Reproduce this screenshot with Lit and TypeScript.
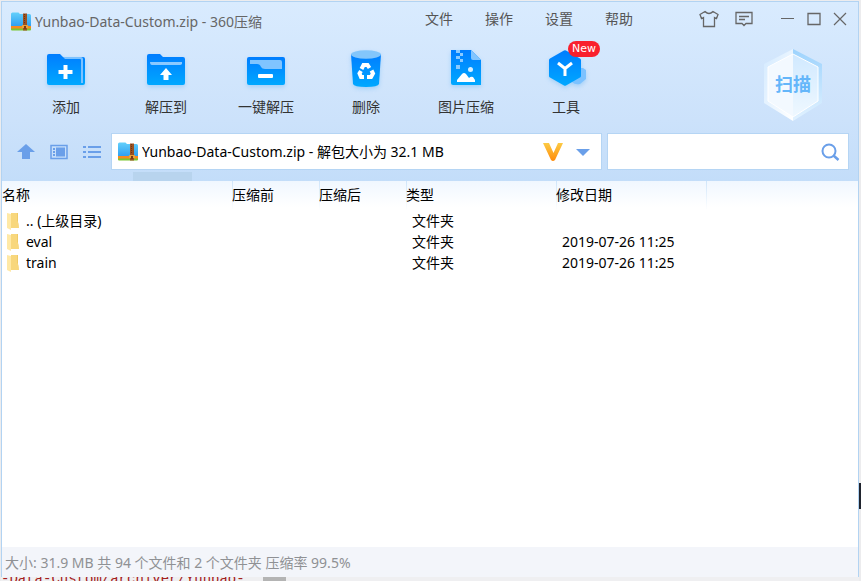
import { LitElement, html, css, svg } from "lit";
import { customElement } from "lit/decorators.js";

interface Entry {
  name: string;
  type: string;
  date: string;
}

const entries: Entry[] = [
  { name: ".. (上级目录)", type: "文件夹", date: "" },
  { name: "eval", type: "文件夹", date: "2019-07-26 11:25" },
  { name: "train", type: "文件夹", date: "2019-07-26 11:25" },
];

const blue = (id: string) => svg`
  <defs><linearGradient id=${id} x1="0" y1="0" x2="0" y2="1">
    <stop offset="0" stop-color="#007dff"/><stop offset="1" stop-color="#00a8ff"/>
  </linearGradient></defs>`;

const archiveIcon = html`<svg class="archive" viewBox="0 0 20 19" width="20" height="19" aria-hidden="true">
  <defs><linearGradient id="ar" x1="0" y1="0" x2="0" y2="1">
    <stop offset="0" stop-color="#63d0fb"/><stop offset="1" stop-color="#2c9cf0"/>
  </linearGradient></defs>
  <path d="M0 2q0-1.500 1.500-1.500h6L9 2h9.500Q20 2 20 3.500V15H0z" fill="url(#ar)"/>
  <path d="M0 14h20v3H0z" fill="#f58b1e"/>
  <path d="M0 16.500h20v1q0 1-1 1H1q-1 0-1-1z" fill="#7cc630"/>
  <path d="M12 1.500h4v17h-4z" fill="#9a5122"/>
  <path d="M13.500 2v10" stroke="#6b3413" stroke-dasharray="1 1"/>
  <path d="M11 13h6v3h-6z" fill="#e9a23b"/>
  <path d="M13 14h2v3h-2z" fill="#7a3c14"/>
</svg>`;

const icons = {
  add: html`<svg viewBox="0 0 40 40" width="40" height="40" aria-hidden="true">${blue("g1")}
    <path d="M1 7q0-2 2-2h11l3 3h20q2 0 2 2v24q0 2-2 2H3q-2 0-2-2z" fill="url(#g1)"/>
    <path d="M17 8h18q2 0 2 2v24h-2V11q0-1-1-1H19z" fill="#7cc2ff"/>
    <path d="M17.500 16h4v5h5v4h-5v5h-4v-5h-5v-4h5z" fill="#fff"/></svg>`,
  extractTo: html`<svg viewBox="0 0 40 40" width="40" height="40" aria-hidden="true">${blue("g2")}
    <path d="M1 7q0-2 2-2h11l3 3h20q2 0 2 2v24q0 2-2 2H3q-2 0-2-2z" fill="url(#g2)"/>
    <path d="M4 13h32v2q-1 1-2 1H6q-2 0-2-3z" fill="#8bc9ff"/>
    <path d="M20 19l6 7h-3.500v5h-5v-5H14z" fill="#fff"/></svg>`,
  quick: html`<svg viewBox="0 0 40 40" width="40" height="40" aria-hidden="true">${blue("g3")}
    <path d="M1 10q0-2 2-2h34q2 0 2 2v24q0 2-2 2H3q-2 0-2-2z" fill="url(#g3)"/>
    <path d="M4 11h30q2 0 2 2v7H19q-3 0-4-2-1-3-4-3H4z" fill="#80c4ff"/>
    <rect x="12" y="25" width="15" height="4" rx="1" fill="#fff"/></svg>`,
  remove: html`<svg viewBox="0 0 40 40" width="40" height="40" aria-hidden="true">${blue("g4")}
    <path d="M5 5h30l-2 30q-1 3-13 3T7 35z" fill="url(#g4)"/>
    <ellipse cx="20" cy="5.500" rx="15" ry="4.200" fill="#83c6fb"/>
    <g fill="none" stroke="#fff" stroke-width="4">
      <path d="M15.500 20l2-4h4l2 3"/><path d="M25.500 21.500l1.500 3-2 3.500h-4"/><path d="M18 28h-3l-1.500-3.500 1.500-2.500"/>
    </g></svg>`,
  image: html`<svg viewBox="0 0 40 40" width="40" height="40" aria-hidden="true">${blue("g5")}
    <path d="M5 1h20l10 10v25H7q-2 0-2-2z" fill="url(#g5)"/>
    <path d="M25 1l10 10H27q-2 0-2-2z" fill="#82c5ff"/>
    <path d="M10 1h4v3h-4zM14 4h3v3h-3zM10 7h4v3h-4zM14 10h3v3h-3zM10 16h4v4h-4z" fill="#8bcaff"/>
    <circle cx="24.500" cy="20.500" r="2.500" fill="#d5efff"/>
    <path d="M11 33v-2l5-6q2-2 4 0l3 4q2-2 4-1l2 3v2z" fill="#fff"/></svg>`,
  tools: html`<svg viewBox="0 0 40 40" width="40" height="40" aria-hidden="true">${blue("g6")}
    <path d="M32 19h5l3 2v9l-6 5q-5 1-8-2z" fill="#7cc2ff"/>
    <path d="M18 1.500q1-.5 2 0l14 8q1 .5 1 1.500v16q0 1-1 1.500l-14 8q-1 .5-2 0l-14-8q-1-.5-1-1.500V11q0-1 1-1.500z" fill="url(#g6)"/>
    <path d="M12 14l7 5.500 7-5.500M19 19v8" fill="none" stroke="#fff" stroke-width="3"/></svg>`,
};

const tools = [
  { label: "添加", icon: icons.add },
  { label: "解压到", icon: icons.extractTo },
  { label: "一键解压", icon: icons.quick },
  { label: "删除", icon: icons.remove },
  { label: "图片压缩", icon: icons.image },
  { label: "工具", icon: icons.tools, badge: "New" },
];

@customElement("app-root")
export class AppRoot extends LitElement {
  static styles = css`
    :host {
      display: flex;
      flex-direction: column;
      box-sizing: border-box;
      min-height: 100vh;
      padding: 1px 2px 0 1px;
      background:
        linear-gradient(#20242e, #20242e) right 483px / 2px 26px no-repeat,
        #ececee;
      font: 14px/20px "Noto Sans", "Noto Sans CJK SC", sans-serif;
      color: #000;
    }
    * { box-sizing: border-box; }
    button {
      border: 0;
      padding: 0;
      background: none;
      font: inherit;
      color: inherit;
      display: flex;
      align-items: center;
      justify-content: center;
    }
    svg { display: block; flex: none; }
    .window {
      flex: 1;
      display: flex;
      flex-direction: column;
      background: #fff;
      border: 1px solid #b2d3f2;
      border-bottom: 0;
    }
    .top {
      background:
        linear-gradient(#b8d4ee, #b8d4ee) 131px bottom / 59px 9px no-repeat,
        linear-gradient(#d9ebfe, #cce2fb 66%, #c3ddf9);
      height: 179px;
      flex: none;
    }
    .titlebar {
      display: flex;
      align-items: center;
      height: 34px;
      padding: 0 11px 0 9px;
      color: #666;
    }
    .title {
      margin: 0;
      padding: 6px 0 0 4px;
      font-size: 14px;
      font-weight: 400;
    }
    .titlebar .archive { margin-top: 5px; }
    .menu {
      display: flex;
      gap: 32px;
      margin-left: auto;
      margin-right: 66px;
      color: #555;
    }
    .controls { display: flex; align-items: center; }
    .controls button + button { margin-left: 12px; }
    .controls .wide { margin-left: 16px; }
    .controls .far { margin-left: 28px; }
    .toolbar {
      display: flex;
      height: 93px;
      padding: 13px 35px 0 14px;
      color: #333;
    }
    .tool {
      position: relative;
      width: 100px;
      flex-direction: column;
      justify-content: flex-start;
      gap: 8px;
      height: 68px;
    }
    .tool svg { overflow: visible; filter: drop-shadow(0 2px 2px #4aa8f055); }
    .badge {
      position: absolute;
      left: 52px;
      top: -8px;
      width: 32px;
      border-radius: 8px;
      background: #f9202d;
      color: #fff;
      font: 11px/16px "DejaVu Sans", sans-serif;
      text-align: center;
    }
    .scan { margin-left: auto; height: 72px; }
    .scan text {
      font: 700 18px "Noto Sans CJK SC", sans-serif;
      fill: #64b6fa;
    }
    .pathbar {
      display: flex;
      align-items: center;
      padding: 4px 9px 0 15px;
    }
    .views { display: flex; gap: 15px; margin-right: 10px; }
    .views button { width: 18px; }
    .field {
      display: flex;
      align-items: center;
      height: 37px;
      border: 1px solid #b5d5f4;
      background: #fff;
      padding: 0 8px 0 6px;
    }
    .field input {
      flex: 1;
      min-width: 0;
      border: 0;
      outline: 0;
      padding: 0 4px;
      background: none;
      color: #000;
      font: inherit;
    }
    .address { flex: 1; }
    .address button { margin-left: 12px; }
    .address { padding-right: 10px; }
    .search { width: 242px; margin-left: 5px; }
    .listing { flex: 1; }
    table {
      width: 100%;
      table-layout: fixed;
      border-collapse: collapse;
    }
    .c-name { width: 230px; }
    .c-size { width: 87px; }
    .c-info { width: 150px; }
    th, td { padding: 0; text-align: left; font-weight: 400; white-space: nowrap; }
    thead tr { background: linear-gradient(#f0f7ff, #fff 90%); }
    th { height: 29px; padding-bottom: 2px; }
    th + th { background: linear-gradient(#cfe5fa, #fff) left top / 1px 100% no-repeat; }
    td { height: 21px; padding-left: 6px; }
    .name { padding-left: 4px; }
    .entry { display: flex; align-items: center; gap: 6px; }
    .status {
      height: 30px;
      padding: 6px 3px 0;
      background: #f3f5fa;
      color: #8f9194;
    }
    .behind {
      display: flex;
      align-items: center;
      height: 4px;
      overflow: hidden;
      background: linear-gradient(90deg, #b4b4b4, #b4b4b4) 262px 0 / 23px 4px no-repeat, #efeff1;
      font: 14px/14px "Liberation Mono", monospace;
      color: #a32020;
    }
  `;

  render() {
    return html`
      <main class="window">
        <header class="top">
          <div class="titlebar">
            ${archiveIcon}
            <h1 class="title">Yunbao-Data-Custom.zip - 360压缩</h1>
            <nav class="menu">
              ${["文件", "操作", "设置", "帮助"].map((m) => html`<button>${m}</button>`)}
            </nav>
            <div class="controls">
              <button aria-label="皮肤"><svg width="20" height="18" viewBox="0 0 20 18" fill="none" stroke="#666" stroke-width="1.300">
                <path d="M6 1.500L1 4.500l1.500 4L4.500 7.500v9h11v-9l2 1L19 4.500l-5-3q-4 4-8 0z"/></svg></button>
              <button class="wide" aria-label="反馈"><svg width="18" height="16" viewBox="0 0 18 16" fill="none" stroke="#666" stroke-width="1.300">
                <path d="M1 1.500h16v11h-6l-2 2-2-2H1zM4 5.500h10M4 8.500h6"/></svg></button>
              <button class="far" aria-label="最小化"><svg width="14" height="14" viewBox="0 0 14 14"><path d="M0 6.500h13" stroke="#666"/></svg></button>
              <button aria-label="最大化"><svg width="14" height="14" viewBox="0 0 14 14"><path d="M1 1.500h12v11H1z" fill="none" stroke="#666" stroke-width="1.300"/></svg></button>
              <button aria-label="关闭"><svg width="14" height="14" viewBox="0 0 14 14"><path d="M1 1l12 12M13 1L1 13" stroke="#666" stroke-width="1.200"/></svg></button>
            </div>
          </div>
          <div class="toolbar">
            ${tools.map((t) => html`<button class="tool">${t.icon}<span>${t.label}</span>
              ${t.badge ? html`<span class="badge">${t.badge}</span>` : ""}</button>`)}
            <button class="scan" aria-label="扫描">
              <svg width="60" height="74" viewBox="0 0 60 74">
                <defs>
                  <linearGradient id="hl" x1="0" y1="0" x2="1" y2="1"><stop offset="0" stop-color="#d3eaff"/><stop offset="1" stop-color="#fff"/></linearGradient>
                  <linearGradient id="hr" x1="0" y1="0" x2="0" y2="1"><stop offset="0" stop-color="#9dd3fd"/><stop offset="1" stop-color="#e2f2ff"/></linearGradient>
                  <linearGradient id="hi" x1="0" y1="0" x2="0" y2="1"><stop offset="0" stop-color="#d0e9ff"/><stop offset="1" stop-color="#eff8ff"/></linearGradient>
                </defs>
                <path d="M30 1L1 16v39l29 18z" fill="url(#hl)"/>
                <path d="M30 1l29 15v39L30 73z" fill="url(#hr)"/>
                <path d="M30 6L5 19v34l25 16z" fill="#f3f9ff"/>
                <path d="M30 6l25 13v34L30 69z" fill="url(#hi)"/>
                <path d="M30 6l25 13v34L30 69 5 53V19z" fill="none" stroke="#fff"/>
                <text x="30" y="43" text-anchor="middle">扫描</text>
              </svg>
            </button>
          </div>
          <div class="pathbar">
            <div class="views">
              <button aria-label="上级目录"><svg width="18" height="16" viewBox="0 0 18 16"><path d="M9 0l9 8h-5v7H5V8H0z" fill="#6a9fe9"/></svg></button>
              <button aria-label="图标视图"><svg width="18" height="16" viewBox="0 0 18 16" fill="#6a9fe9">
                <path d="M1 1.500h16v13H1z" fill="none" stroke="#6a9fe9" stroke-width="1.500"/><path d="M3 4h2v2H3zM3 7h2v2H3zM3 10h2v2H3zM6 3.500h9v9H6z"/></svg></button>
              <button aria-label="列表视图"><svg width="18" height="16" viewBox="0 0 18 16" fill="#6a9fe9"><path d="M0 2h3v2H0zM5 2h13v2H5zM0 7h3v2H0zM5 7h13v2H5zM0 12h3v2H0zM5 12h13v2H5z"/></svg></button>
            </div>
            <div class="field address">
              ${archiveIcon}
              <input aria-label="路径" readonly .value=${"Yunbao-Data-Custom.zip - 解包大小为 32.1 MB"} />
              <svg width="20" height="18" viewBox="0 0 20 18" aria-hidden="true">
                <defs><linearGradient id="v" x1="0" y1="0" x2="0" y2="1"><stop offset="0" stop-color="#fccb45"/><stop offset="1" stop-color="#ff8b0a"/></linearGradient></defs>
                <path d="M0 0h6l4.500 10L15 0h5l-8 17q-2 2-4 0z" fill="url(#v)"/></svg>
              <button aria-label="展开"><svg width="16" height="8" viewBox="0 0 16 8"><path d="M1 1h14L8 8z" fill="#6a9fe9"/></svg></button>
            </div>
            <div class="field search">
              <input type="text" aria-label="搜索" />
              <button aria-label="开始搜索"><svg width="19" height="18" viewBox="0 0 19 18" fill="none" stroke="#6a9fe9">
                <circle cx="8" cy="8" r="6.500" stroke-width="2"/><path d="M12.500 12.500l5 4.500" stroke-width="2.500"/></svg></button>
            </div>
          </div>
        </header>
        <section class="listing">
          <table>
            <colgroup><col class="c-name" /><col class="c-size" /><col class="c-size" /><col class="c-info" /><col class="c-info" /><col /></colgroup>
            <thead>
              <tr><th>名称</th><th>压缩前</th><th>压缩后</th><th>类型</th><th>修改日期</th><th></th></tr>
            </thead>
            <tbody>
              ${entries.map((e) => html`<tr>
                <td class="name"><div class="entry">
                  <svg width="14" height="18" viewBox="0 0 14 18" aria-hidden="true">
                    <path d="M5 1h7v15H5z" fill="#f0ca66"/><path d="M1 1l4 1v16l-4-2z" fill="#ffe9a6"/><path d="M5 1h6v8q2 1 2 7H5z" fill="#f8d77c"/></svg>
                  ${e.name}</div></td>
                <td></td><td></td><td>${e.type}</td><td>${e.date}</td><td></td>
              </tr>`)}
            </tbody>
          </table>
        </section>
        <footer class="status">大小: 31.9 MB 共 94 个文件和 2 个文件夹 压缩率 99.5%</footer>
      </main>
      <div class="behind" aria-hidden="true">-Data-Custom/archiver/Yunbao-</div>
    `;
  }
}
